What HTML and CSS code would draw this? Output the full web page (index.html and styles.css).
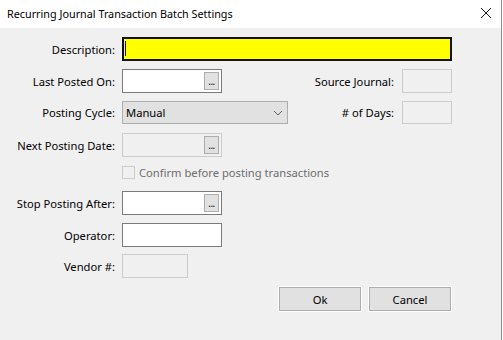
FILE: index.html
```html
<!DOCTYPE html>
<html lang="en">
<head>
  <meta charset="UTF-8">
  <meta name="viewport" content="width=device-width, initial-scale=1.0">
  <title>Recurring Journal Transaction Batch Settings</title>
  <link rel="stylesheet" href="styles.css">
</head>
<body>
  <div class="window">
    <div class="titlebar">
      <span class="title">Recurring Journal Transaction Batch Settings</span>
      <svg class="close" width="12" height="12" viewBox="0 0 12 12">
        <path d="M1 1 L11 11 M11 1 L1 11" stroke="#111" stroke-width="1" fill="none"/>
      </svg>
    </div>

    <form class="content">
      <div class="row r-desc">
        <label class="lbl">Description:</label>
        <div class="field desc"><span class="caret"></span></div>
      </div>

      <div class="row r-gap8">
        <label class="lbl">Last Posted On:</label>
        <div class="field date">
          <span class="dots">...</span>
        </div>
        <div class="side">
          <label class="side-lbl">Source Journal:</label>
          <div class="field off small"></div>
        </div>
      </div>

      <div class="row r-gap8 r-select">
        <label class="lbl">Posting Cycle:</label>
        <div class="field select">
          <span>Manual</span>
          <svg width="10" height="6" viewBox="0 0 10 6">
            <path d="M1 1 L5 5 L9 1" stroke="#606060" stroke-width="1" fill="none"/>
          </svg>
        </div>
        <div class="side">
          <label class="side-lbl"># of Days:</label>
          <div class="field off small"></div>
        </div>
      </div>

      <div class="row r-gap9">
        <label class="lbl">Next Posting Date:</label>
        <div class="field date off">
          <span class="dots">...</span>
        </div>
      </div>

      <div class="row r-check">
        <span class="lbl"></span>
        <span class="check"></span>
        <span class="check-text">Confirm before posting transactions</span>
      </div>

      <div class="row r-stop">
        <label class="lbl">Stop Posting After:</label>
        <div class="field date">
          <span class="dots">...</span>
        </div>
      </div>

      <div class="row r-gap8">
        <label class="lbl">Operator:</label>
        <div class="field plain"></div>
      </div>

      <div class="row r-gap7">
        <label class="lbl">Vendor #:</label>
        <div class="field off vendor"></div>
      </div>

      <div class="buttons">
        <button type="button" class="btn">Ok</button>
        <button type="button" class="btn">Cancel</button>
      </div>
    </form>
  </div>
</body>
</html>
```

FILE: styles.css
```css
* {
  box-sizing: border-box;
}

body {
  margin: 0;
  background: #fff;
  font-family: "Noto Sans", "Open Sans", sans-serif;
  font-size: 11.2px;
  color: #000;
}

.window {
  width: 502px;
  height: 340px;
  background: #f0f0f0;
  border-right: 1px solid #8c8c8c;
}

.titlebar {
  height: 28px;
  background: #fff;
  display: flex;
  align-items: center;
  padding-left: 7px;
  padding-right: 8px;
}

.title {
  flex: 1;
  font-size: 10.8px;
  margin-top: -2px;
}

.close {
  margin-right: 1px;
  margin-top: -2px;
}

.content {
  padding-top: 9px;
  padding-right: 49px;
}

.row {
  display: flex;
  align-items: center;
  height: 24px;
}

.r-gap7 { margin-top: 7px; }
.r-gap8 { margin-top: 8px; }
.r-gap9 { margin-top: 9px; }
.r-select { height: 23px; }
.r-check { margin-top: 9px; height: 13px; }
.r-stop { margin-top: 12px; }

.lbl {
  width: 115px;
  margin-right: 7px;
  text-align: right;
  white-space: nowrap;
}

.field {
  height: 100%;
  border: 1px solid #7a7a7a;
  background: #fff;
}

.desc {
  width: 330px;
  border: 2px solid #111;
  background: #ffff00;
  padding: 2px 0 0 1px;
}

.caret {
  display: block;
  width: 1px;
  height: 15px;
  background: #0000c8;
}

.date {
  width: 100px;
  display: flex;
  justify-content: flex-end;
  align-items: center;
  padding-right: 2px;
}

.dots {
  width: 15px;
  height: 18px;
  background: #e1e1e1;
  border: 1px solid #adadad;
  display: flex;
  justify-content: center;
  align-items: flex-end;
  font-size: 10px;
  line-height: 11px;
  padding-bottom: 2px;
  letter-spacing: -0.5px;
}

.off {
  border-color: #cccccc;
  background: #f0f0f0;
}

.plain {
  width: 100px;
}

.vendor {
  width: 66px;
}

.select {
  width: 166px;
  background: #e1e1e1;
  border-color: #adadad;
  display: flex;
  align-items: center;
  justify-content: space-between;
  padding: 0 4px 0 3px;
}

.side {
  margin-left: auto;
  display: flex;
  align-items: center;
  height: 100%;
}

.side-lbl {
  margin-right: 8px;
  white-space: nowrap;
}

.small {
  width: 50px;
}

.check {
  width: 13px;
  height: 13px;
  border: 1px solid #cccccc;
  background: #f0f0f0;
  margin-right: 4px;
}

.check-text {
  color: #6d6d6d;
  white-space: nowrap;
}

.buttons {
  display: flex;
  justify-content: flex-end;
  gap: 8px;
  margin-top: 9px;
  margin-right: 1px;
}

.btn {
  width: 82px;
  height: 24px;
  background: #e1e1e1;
  border: 1px solid #adadad;
  box-shadow: 0 0 0 1px #fff;
  font-family: inherit;
  font-size: 11.2px;
  color: #000;
  padding: 0;
}
```
